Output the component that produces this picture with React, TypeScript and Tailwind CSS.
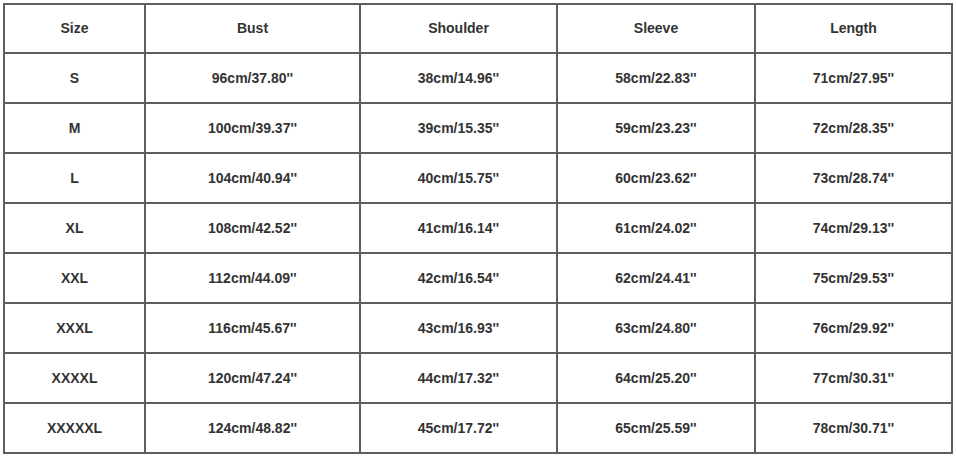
import React from "react";

const header = ["Size", "Bust", "Shoulder", "Sleeve", "Length"];
const rows = [
  ["S", "96cm/37.80''", "38cm/14.96''", "58cm/22.83''", "71cm/27.95''"],
  ["M", "100cm/39.37''", "39cm/15.35''", "59cm/23.23''", "72cm/28.35''"],
  ["L", "104cm/40.94''", "40cm/15.75''", "60cm/23.62''", "73cm/28.74''"],
  ["XL", "108cm/42.52''", "41cm/16.14''", "61cm/24.02''", "74cm/29.13''"],
  ["XXL", "112cm/44.09''", "42cm/16.54''", "62cm/24.41''", "75cm/29.53''"],
  ["XXXL", "116cm/45.67''", "43cm/16.93''", "63cm/24.80''", "76cm/29.92''"],
  ["XXXXL", "120cm/47.24''", "44cm/17.32''", "64cm/25.20''", "77cm/30.31''"],
  ["XXXXXL", "124cm/48.82''", "45cm/17.72''", "65cm/25.59''", "78cm/30.71''"],
];

export default function App() {
  const all = [header, ...rows];
  return (
    <div className="w-[956px] h-[457px] bg-white pl-[3px] pt-[3px]" style={{ fontFamily: '"Liberation Sans", Arial, sans-serif' }}>
      <div className="inline-grid grid-cols-[139px_213px_195px_196px_195px] grid-rows-[47px_repeat(8,48px)] gap-[2px] p-[2px] bg-[#5e5e5e]">
        {all.map((r, i) =>
          r.map((c, j) => (
            <div
              key={i + "-" + j}
              className="bg-white flex items-center justify-center text-[14px] font-bold text-[#333333]"
            >
              {c}
            </div>
          ))
        )}
      </div>
    </div>
  );
}
